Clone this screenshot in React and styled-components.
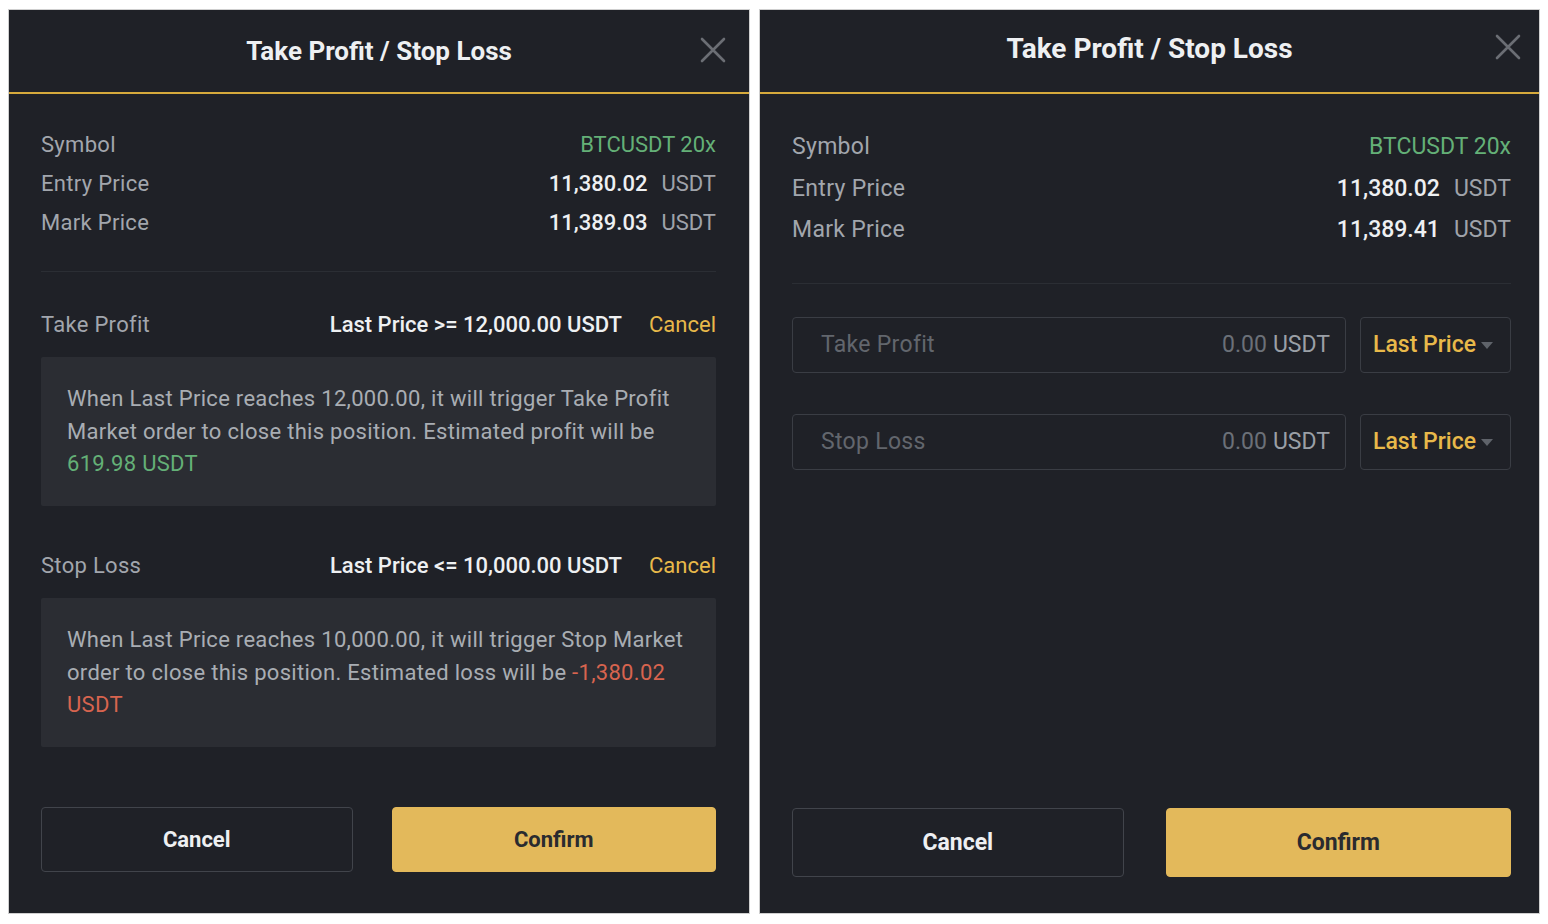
import React from "react";
import styled, { createGlobalStyle } from "styled-components";

const Global = createGlobalStyle`
  html, body { margin: 0; padding: 0; background: #ffffff; }
  body { font-family: Roboto, "Noto Sans", "Liberation Sans", sans-serif; }
  * { box-sizing: border-box; }
`;

const Page = styled.div`
  display: flex;
  align-items: flex-start;
  gap: 11px;
  padding: 10px 0 0 9px;
  width: 1548px;
  height: 924px;
`;

const Panel = styled.section`
  width: ${(p) => p.$w}px;
  height: 903px;
  background: #1f2127;
  box-shadow: 0 0 0 1px #cfcfcf;
  display: flex;
  flex-direction: column;
  color: #eaecef;
`;

const Header = styled.header`
  position: relative;
  height: 84px;
  flex: none;
  display: flex;
  align-items: center;
  justify-content: center;
  border-bottom: 2px solid #d6aa3c;
  padding-bottom: ${(p) => p.$titleShift}px;
`;

const Title = styled.h2`
  margin: 0;
  font-size: ${(p) => p.$size}px;
  font-weight: 700;
  color: #eef0f2;
`;

const Close = styled.button`
  position: absolute;
  right: ${(p) => p.$right}px;
  top: ${(p) => p.$top}px;
  width: 26px;
  height: 26px;
  padding: 0;
  border: none;
  background: transparent;
  display: flex;
  align-items: center;
  justify-content: center;
`;

const Body = styled.div`
  flex: 1;
  display: flex;
  flex-direction: column;
  padding: ${(p) => p.$top}px ${(p) => p.$right}px ${(p) => p.$bottom}px 32px;
`;

const InfoRow = styled.div`
  height: ${(p) => p.$h}px;
  display: flex;
  align-items: center;
  justify-content: space-between;
  font-size: ${(p) => p.$fs}px;
`;

const Label = styled.span`
  color: #a2a6ad;
  letter-spacing: 0.3px;
`;

const Green = styled.span`
  color: #64b077;
`;

const Value = styled.span`
  display: flex;
  align-items: baseline;
  gap: 14px;
`;

const Num = styled.span`
  color: #eef0f2;
  font-weight: 500;
`;

const Unit = styled.span`
  color: #9fa3aa;
`;

const Divider = styled.hr`
  margin: ${(p) => p.$mt}px 0 ${(p) => p.$mb}px;
  border: none;
  border-top: 1px solid #2b2e34;
  height: 0;
`;

const TriggerRow = styled.div`
  height: 40px;
  display: flex;
  align-items: center;
  justify-content: space-between;
  font-size: 22px;
  margin-top: ${(p) => p.$mt || 0}px;
`;

const TriggerValue = styled.span`
  display: flex;
  align-items: baseline;
  gap: 27px;
`;

const Condition = styled.span`
  color: #eef0f2;
  font-weight: 500;
`;

const LinkCancel = styled.span`
  color: #e8b94a;
`;

const Note = styled.div`
  margin-top: 13px;
  background: #2b2d33;
  border-radius: 2px;
  padding: 26px 26px;
  font-size: 22px;
  letter-spacing: 0.3px;
  line-height: 32.5px;
  color: #a9adb3;
  height: 149px;
`;

const Red = styled.span`
  color: #d8644f;
`;

const Buttons = styled.div`
  margin-top: auto;
  display: grid;
  grid-template-columns: 48fr 50fr;
  gap: ${(p) => p.$gap}px;
`;

const Button = styled.button`
  height: ${(p) => p.$h}px;
  border-radius: 4px;
  font-family: inherit;
  font-size: ${(p) => p.$fs}px;
  font-weight: 700;
  border: 1px solid ${(p) => (p.$primary ? "#e3b95b" : "#41444b")};
  background: ${(p) => (p.$primary ? "#e3b95b" : "transparent")};
  color: ${(p) => (p.$primary ? "#2a2b2f" : "#eef0f2")};
`;

const FieldRow = styled.div`
  display: flex;
  gap: 14px;
  height: 56px;
  margin-top: ${(p) => p.$mt}px;
`;

const Field = styled.div`
  flex: 1;
  border: 1px solid #3a3d44;
  border-radius: 4px;
  display: flex;
  align-items: center;
  justify-content: space-between;
  padding: 0 15px 0 28px;
  font-size: 23px;
`;

const Placeholder = styled.span`
  color: #62666d;
  letter-spacing: 0.3px;
`;

const FieldUnit = styled.span`
  display: flex;
  gap: 6px;
  color: #6b7078;
`;

const FieldUnitStrong = styled.span`
  color: #9a9fa6;
`;

const Select = styled.div`
  width: 151px;
  border: 1px solid #3a3d44;
  border-radius: 4px;
  display: flex;
  align-items: center;
  gap: 5px;
  padding-left: 12px;
  font-size: 23px;
  color: #e8b94a;
  font-weight: 500;
`;

const Caret = styled.span`
  width: 0;
  height: 0;
  border-left: 6px solid transparent;
  border-right: 6px solid transparent;
  border-top: 7px solid #5f636a;
  margin-top: 2px;
`;

function CloseIcon() {
  return (
    <svg width="26" height="26" viewBox="0 0 26 26">
      <path d="M2 2 L24 24 M24 2 L2 24" stroke="#6b6e74" strokeWidth="2.6" strokeLinecap="round" />
    </svg>
  );
}

function Info({ h, fs, mark }) {
  return (
    <>
      <InfoRow $h={h} $fs={fs}>
        <Label>Symbol</Label>
        <Green>BTCUSDT 20x</Green>
      </InfoRow>
      <InfoRow $h={h} $fs={fs}>
        <Label>Entry Price</Label>
        <Value>
          <Num>11,380.02</Num>
          <Unit>USDT</Unit>
        </Value>
      </InfoRow>
      <InfoRow $h={h} $fs={fs}>
        <Label>Mark Price</Label>
        <Value>
          <Num>{mark}</Num>
          <Unit>USDT</Unit>
        </Value>
      </InfoRow>
    </>
  );
}

export default function App() {
  return (
    <>
      <Global />
      <Page>
        <Panel $w={740}>
          <Header $titleShift={0}>
            <Title $size={26}>Take Profit / Stop Loss</Title>
            <Close $right={23} $top={27}>
              <CloseIcon />
            </Close>
          </Header>
          <Body $top={31} $right={33} $bottom={41}>
            <Info h={39} fs={22} mark="11,389.03" />
            <Divider $mt={29} $mb={0} />
            <TriggerRow $mt={32}>
              <Label>Take Profit</Label>
              <TriggerValue>
                <Condition>Last Price &gt;= 12,000.00 USDT</Condition>
                <LinkCancel>Cancel</LinkCancel>
              </TriggerValue>
            </TriggerRow>
            <Note>
              When Last Price reaches 12,000.00, it will trigger Take Profit Market order to close this
              position. Estimated profit will be <Green>619.98 USDT</Green>
            </Note>
            <TriggerRow $mt={39}>
              <Label>Stop Loss</Label>
              <TriggerValue>
                <Condition>Last Price &lt;= 10,000.00 USDT</Condition>
                <LinkCancel>Cancel</LinkCancel>
              </TriggerValue>
            </TriggerRow>
            <Note>
              When Last Price reaches 10,000.00, it will trigger Stop Market order to close this position.
              Estimated loss will be <Red>-1,380.02</Red> <Red>USDT</Red>
            </Note>
            <Buttons $gap={39}>
              <Button $h={65} $fs={22}>Cancel</Button>
              <Button $h={65} $fs={22} $primary>Confirm</Button>
            </Buttons>
          </Body>
        </Panel>
        <Panel $w={779}>
          <Header $titleShift={6}>
            <Title $size={28}>Take Profit / Stop Loss</Title>
            <Close $right={18} $top={24}>
              <CloseIcon />
            </Close>
          </Header>
          <Body $top={32} $right={28} $bottom={36}>
            <Info h={41.5} fs={23} mark="11,389.41" />
            <Divider $mt={32} $mb={0} />
            <FieldRow $mt={33}>
              <Field>
                <Placeholder>Take Profit</Placeholder>
                <FieldUnit>
                  0.00 <FieldUnitStrong>USDT</FieldUnitStrong>
                </FieldUnit>
              </Field>
              <Select>
                Last Price <Caret />
              </Select>
            </FieldRow>
            <FieldRow $mt={41}>
              <Field>
                <Placeholder>Stop Loss</Placeholder>
                <FieldUnit>
                  0.00 <FieldUnitStrong>USDT</FieldUnitStrong>
                </FieldUnit>
              </Field>
              <Select>
                Last Price <Caret />
              </Select>
            </FieldRow>
            <Buttons $gap={42}>
              <Button $h={69} $fs={23}>Cancel</Button>
              <Button $h={69} $fs={23} $primary>Confirm</Button>
            </Buttons>
          </Body>
        </Panel>
      </Page>
    </>
  );
}
